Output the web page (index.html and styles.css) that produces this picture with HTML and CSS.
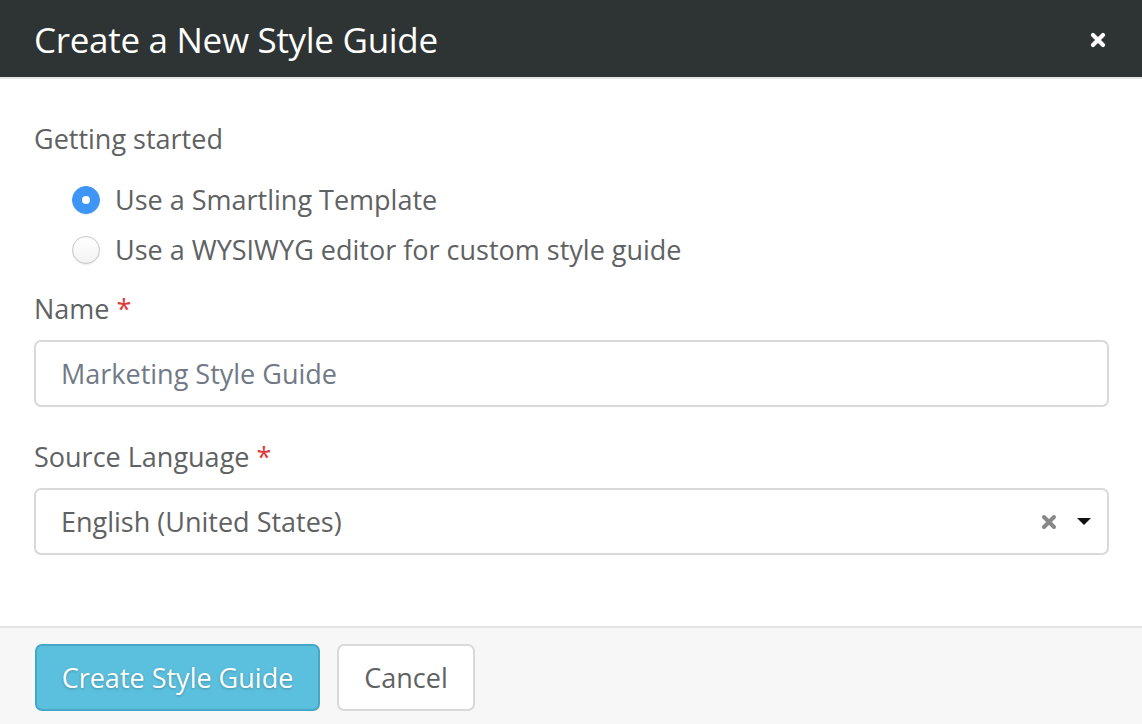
FILE: index.html
```html
<!DOCTYPE html>
<html>
<head>
<meta charset="utf-8">
<link rel="stylesheet" href="styles.css">
</head>
<body>
<div class="modal">
  <div class="modal-header">
    <h1 class="modal-title">Create a New Style Guide</h1>
    <span class="close" aria-label="Close">
      <svg width="16" height="16" viewBox="0 0 16 16"><path d="M3 3 L13 13 M13 3 L3 13" stroke="#fff" stroke-width="4.2" stroke-linecap="round"/></svg>
    </span>
  </div>
  <div class="modal-body">
    <div class="section-label">Getting started</div>
    <div class="radios">
      <label class="radio"><span class="radio-dot checked"></span><span>Use a Smartling Template</span></label>
      <label class="radio"><span class="radio-dot"></span><span>Use a WYSIWYG editor for custom style guide</span></label>
    </div>
    <div class="field">
      <div class="field-label">Name <span class="req">*</span></div>
      <div class="input"><span class="placeholder">Marketing Style Guide</span></div>
    </div>
    <div class="field">
      <div class="field-label">Source Language <span class="req">*</span></div>
      <div class="input select">
        <span class="value">English (United States)</span>
        <span class="select-icons">
          <svg class="clear" width="16" height="16" viewBox="0 0 16 16"><path d="M3 3 L13 13 M13 3 L3 13" stroke="#888" stroke-width="4" stroke-linecap="round"/></svg>
          <svg class="caret" width="14" height="8" viewBox="0 0 14 8"><path d="M0 0 L14 0 L7 7 Z" fill="#111"/></svg>
        </span>
      </div>
    </div>
  </div>
  <div class="modal-footer">
    <button class="btn btn-primary">Create Style Guide</button>
    <button class="btn btn-default">Cancel</button>
  </div>
</div>
</body>
</html>
```

FILE: styles.css
```css
* { box-sizing: border-box; }
html, body { margin: 0; padding: 0; }
body {
  width: 1142px;
  height: 724px;
  overflow: hidden;
  font-family: "Open Sans", "Liberation Sans", sans-serif;
  background: #fff;
  color: #5f6263;
}
.modal { display: flex; flex-direction: column; height: 724px; }
.modal-header {
  height: 79px;
  background: #2e3333;
  border-bottom: 2px solid #e5e5e5;
  display: flex;
  align-items: center;
  justify-content: space-between;
  padding: 2px 36px 0 34px;
}
.modal-title {
  margin: 0;
  font-size: 35px;
  font-weight: 500;
  color: #fff;
  letter-spacing: -0.3px;
}
.close { display: flex; }
.modal-body {
  flex: 1;
  padding: 40px 33px 0 34px;
}
.section-label { font-size: 27px; line-height: 40px; }
.radios { padding-left: 38px; margin-top: 16px; }
.radio {
  display: flex;
  align-items: center;
  gap: 15px;
  font-size: 27px;
  line-height: 50px;
}
.radio-dot {
  width: 28px; height: 28px;
  border-radius: 50%;
  border: 1.5px solid #c4c4c4;
  background: linear-gradient(#fff, #f2f2f2);
  box-shadow: 0 1px 1px rgba(0,0,0,0.08);
  position: relative;
}
.radio-dot.checked {
  background: #3d95f5;
  border-color: #3d95f5;
}
.radio-dot.checked::after {
  content: "";
  position: absolute;
  width: 8px; height: 8px;
  border-radius: 50%;
  background: #fff;
  left: 50%; top: 50%;
  transform: translate(-50%, -50%);
}
.field { margin-top: 14px; }
.field + .field { margin-top: 30px; }
.field-label { font-size: 27px; line-height: 40px; margin-bottom: 11px; }
.req { color: #e03a3a; }
.input {
  height: 67px;
  border: 2px solid #d9d9d9;
  border-radius: 7px;
  display: flex;
  align-items: center;
  padding: 0 25px;
  font-size: 27px;
}
.placeholder { color: #717a86; }
.select { justify-content: space-between; padding-right: 16px; }
.select-icons { display: flex; align-items: center; gap: 20px; }
.modal-footer {
  height: 98px;
  background: #f7f7f7;
  border-top: 2px solid #e5e5e5;
  display: flex;
  align-items: center;
  gap: 17px;
  padding: 2px 34px 0 35px;
}
.btn {
  height: 67px;
  border-radius: 7px;
  font-family: inherit;
  font-size: 27px;
  padding: 0 20px;
  cursor: pointer;
}
.btn-primary {
  background: #5bc0de;
  border: 2px solid #46a6c5;
  color: #fff;
  font-weight: 500;
  text-shadow: 0 1px 3px rgba(0,0,0,0.25);
  width: 285px;
}
.btn-default {
  background: #fff;
  border: 2px solid #d9d9d9;
  color: #5f6263;
  width: 138px;
}
```
